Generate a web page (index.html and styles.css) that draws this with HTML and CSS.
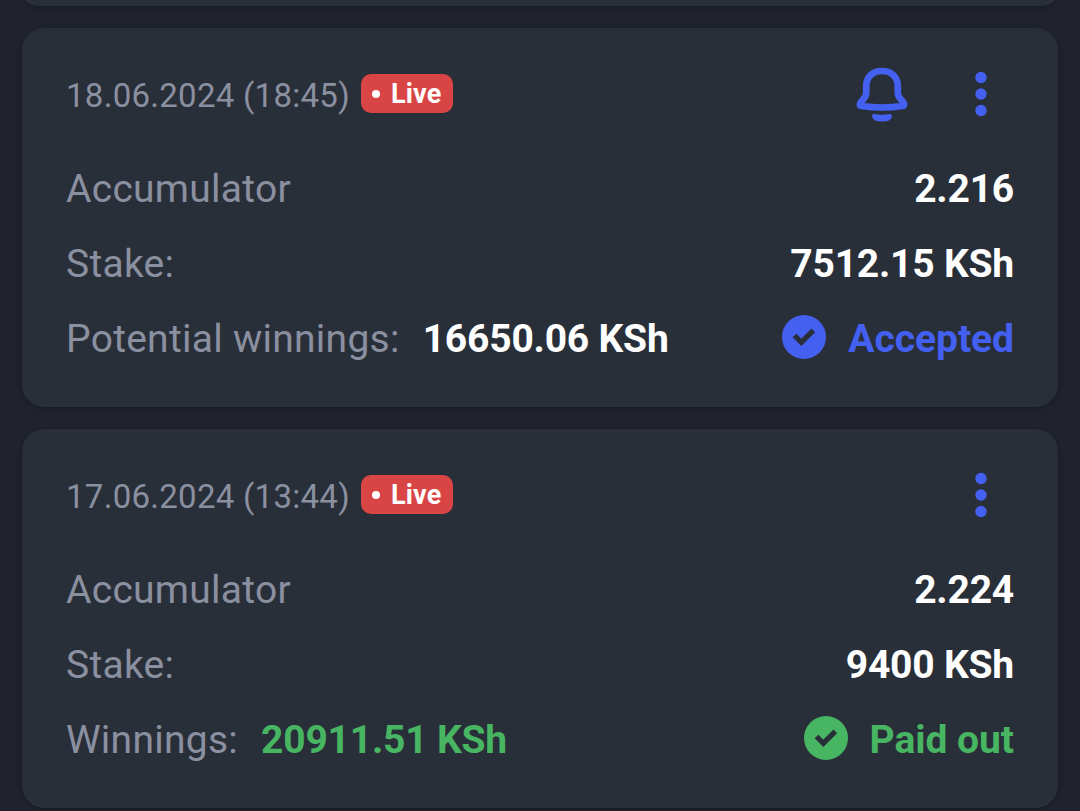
FILE: index.html
```html
<!DOCTYPE html>
<html lang="en">
<head>
  <meta charset="UTF-8">
  <meta name="viewport" content="width=device-width, initial-scale=1">
  <title>Bet history</title>
  <link rel="stylesheet" href="styles.css">
</head>
<body>
  <main class="bets">
    <div class="card card-prev"></div>

    <!-- Accepted bet -->
    <section class="card">
      <header class="card-head">
        <span class="date">18.06.2024 (18:45)</span>
        <span class="live">Live</span>
        <div class="actions">
          <svg class="bell" width="54" height="56" viewBox="0 0 54 56">
            <path d="M27 5C17 5 11.200 11.500 11.200 21V27C11.200 33 4.900 35 4.900 38.500C4.900 39.300 5.400 39.800 6.500 40C20 42 34 42 47.500 40C48.600 39.800 49.100 39.300 49.100 38.500C49.100 35 42.800 33 42.800 27V21C42.800 11.500 37 5 27 5Z" fill="none" stroke="currentColor" stroke-width="6.700" stroke-linejoin="round"/>
            <path d="M19 48Q27 49.300 35 48Q37 48 37 50Q37 55.500 27 55.500Q17 55.500 17 50Q17 48 19 48Z" fill="currentColor"/>
          </svg>
          <svg class="dots" width="12" height="46" viewBox="0 0 12 46">
            <circle cx="6" cy="6.500" r="5.700"/><circle cx="6" cy="23" r="5.700"/><circle cx="6" cy="39.500" r="5.700"/>
          </svg>
        </div>
      </header>
      <div class="row">
        <span class="label">Accumulator</span>
        <span class="value">2.216</span>
      </div>
      <div class="row">
        <span class="label">Stake:</span>
        <span class="value">7512.15 KSh</span>
      </div>
      <div class="row">
        <span class="label">Potential winnings:</span>
        <span class="sum">16650.06 KSh</span>
        <span class="status accepted">
          <svg class="check" width="44" height="44" viewBox="0 0 44 44"><circle cx="22" cy="22" r="22" fill="currentColor"/><path d="M12.500 20.500L19.300 27.300L31.300 15.300" fill="none" stroke="#292f39" stroke-width="5.200"/></svg>
          Accepted
        </span>
      </div>
    </section>

    <!-- Paid bet -->
    <section class="card">
      <header class="card-head">
        <span class="date">17.06.2024 (13:44)</span>
        <span class="live">Live</span>
        <div class="actions">
          <svg class="dots" width="12" height="46" viewBox="0 0 12 46">
            <circle cx="6" cy="6.500" r="5.700"/><circle cx="6" cy="23" r="5.700"/><circle cx="6" cy="39.500" r="5.700"/>
          </svg>
        </div>
      </header>
      <div class="row">
        <span class="label">Accumulator</span>
        <span class="value">2.224</span>
      </div>
      <div class="row">
        <span class="label">Stake:</span>
        <span class="value">9400 KSh</span>
      </div>
      <div class="row">
        <span class="label">Winnings:</span>
        <span class="sum won">20911.51 KSh</span>
        <span class="status paid">
          <svg class="check" width="44" height="44" viewBox="0 0 44 44"><circle cx="22" cy="22" r="22" fill="currentColor"/><path d="M12.500 20.500L19.300 27.300L31.300 15.300" fill="none" stroke="#292f39" stroke-width="5.200"/></svg>
          Paid out
        </span>
      </div>
    </section>
  </main>
</body>
</html>
```
FILE: styles.css
```css
* {
  box-sizing: border-box;
}

body {
  margin: 0;
  height: 811px;
  overflow: hidden;
  background: #20222d;
  font-family: Roboto, sans-serif;
}

.bets {
  display: flex;
  flex-direction: column;
  gap: 22px;
  padding: 0 22px;
}

.card {
  flex: none;
  height: 379px;
  padding: 28px 44px 0;
  border-radius: 22px;
  background: #292f39;
  box-shadow: 0 1px 4px rgba(0, 0, 0, 0.3);
}

/* bottom edge of the card scrolled out above */
.card-prev {
  height: 30px;
  margin-top: -24px;
}

.card-head {
  display: flex;
  align-items: center;
  height: 75px;
  margin-bottom: 20px;
}

.date {
  padding-top: 3px;
  color: #8b90a0;
  font-size: 33px;
  letter-spacing: 0.28px;
}

.live {
  display: flex;
  align-items: center;
  gap: 11px;
  width: 92px;
  height: 39px;
  margin-left: 11px;
  padding-left: 11px;
  border-radius: 10px;
  background: #d94545;
  color: #fff;
  font-size: 27px;
  font-weight: 700;
  letter-spacing: 0.2px;
}

.live::before {
  content: "";
  width: 8px;
  height: 8px;
  border-radius: 50%;
  background: #fff;
}

.actions {
  display: flex;
  align-items: center;
  gap: 66px;
  margin-left: auto;
  margin-right: 27px;
  color: #4460f1;
}

.dots {
  fill: currentColor;
}

.row {
  display: flex;
  align-items: center;
  height: 75px;
  font-size: 39px;
}

.label {
  color: #8b90a0;
  letter-spacing: 0.27px;
}

.value,
.sum,
.status {
  color: #fff;
  font-weight: 700;
  letter-spacing: -0.2px;
}

.value,
.status {
  margin-left: auto;
}

.sum {
  margin-left: 23px;
}

.status {
  display: flex;
  align-items: center;
  gap: 22px;
  letter-spacing: -0.05px;
}

.check {
  margin-bottom: 4px;
}

.accepted {
  color: #4460f1;
}

.won,
.paid {
  color: #48b563;
}
```
